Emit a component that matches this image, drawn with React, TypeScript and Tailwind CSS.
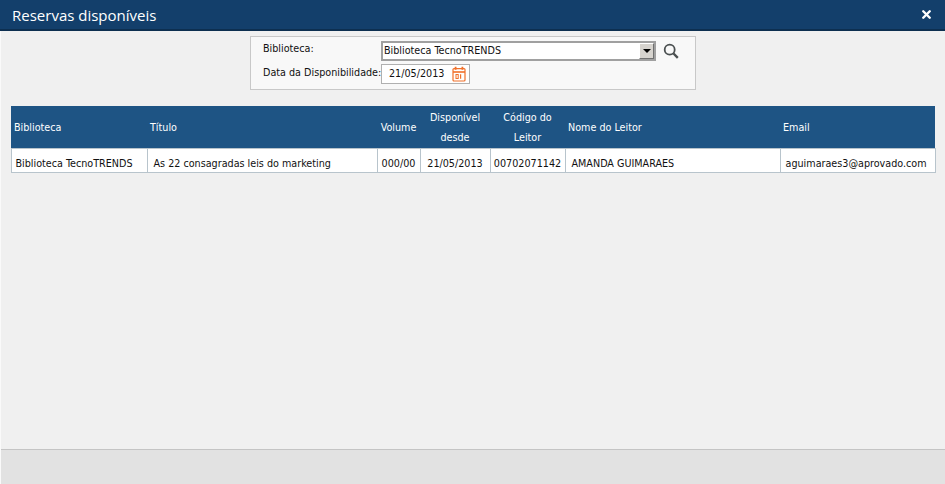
import { X } from "lucide-react"

const body = "font-['DejaVu_Sans_Condensed','DejaVu_Sans',sans-serif] [font-stretch:condensed]"

const colunas = [
  { titulo: "Biblioteca", w: "w-[136px]", align: "text-left pl-[3px]" },
  { titulo: "Título", w: "w-[230px]", align: "text-left pl-[3px]" },
  { titulo: "Volume", w: "w-[43px]", align: "text-center" },
  { titulo: "Disponível desde", w: "w-[70px]", align: "text-center px-2" },
  { titulo: "Código do Leitor", w: "w-[75px]", align: "text-center px-2" },
  { titulo: "Nome do Leitor", w: "w-[215px]", align: "text-left pl-[3px]" },
  { titulo: "Email", w: "w-[155px]", align: "text-left pl-[3px]" },
]

const linha = [
  { valor: "Biblioteca TecnoTRENDS", align: "pl-[4px]" },
  { valor: "As 22 consagradas leis do marketing", align: "pl-[6px]" },
  { valor: "000/00", align: "text-center" },
  { valor: "21/05/2013", align: "text-center" },
  { valor: "00702071142", align: "text-center" },
  { valor: "AMANDA GUIMARAES", align: "pl-[6px]" },
  { valor: "aguimaraes3@aprovado.com", align: "pl-[5px]" },
]

function CalendarIcon() {
  return (
    <svg width="14" height="16" viewBox="0 0 14 16" fill="none" stroke="#f0702a" strokeWidth="1.2">
      <rect x="1" y="2.6" width="12" height="12.4" rx="1" />
      <path d="M1 6h12" strokeWidth="1.6" />
      <path d="M3.6 0.8v3M10.4 0.8v3" strokeWidth="1.8" />
      <rect x="4" y="8.5" width="2.2" height="4" strokeWidth="1" />
      <path d="M8.6 8.3v4.4" strokeWidth="1.2" />
    </svg>
  )
}

function SearchIcon() {
  return (
    <svg width="16" height="16" viewBox="0 0 16 16" fill="none" stroke="#4a4f50">
      <circle cx="6.7" cy="6.7" r="5" strokeWidth="1.8" />
      <path d="M10.5 10.5l4.3 4.3" strokeWidth="2.4" />
    </svg>
  )
}

export default function App() {
  return (
    <div className={`h-[484px] w-[945px] flex flex-col bg-[#f0f0f0] border-l border-[#fafafa] text-[#111] ${body}`}>
      <div className="h-[31px] -ml-px shrink-0 flex items-center justify-between pl-[12px] pr-[12px] bg-[#133f6b] border-b-2 border-[#0d2f50]">
        <span className="text-white text-[15px] pt-[1px] font-['Open_Sans',sans-serif] [font-stretch:normal]">Reservas disponíveis</span>
        <X size={13} strokeWidth={4.5} className="text-white" />
      </div>

      <div className="flex-1 flex flex-col">
        <div className="mt-[5px] ml-[249px] w-[446px] h-[54px] bg-[#f8f8f8] border border-[#c8c8c8] pl-[12px] pt-[4px] text-[10.7px]">
          <div className="flex h-[21px]">
            <span className="w-[118px] shrink-0">Biblioteca:</span>
            <div className="w-[275px] h-[20px] bg-white border-2 border-[#a0a0a0] flex items-center justify-between pl-[1px]">
              <span>Biblioteca TecnoTRENDS</span>
              <div className="w-[15px] h-full bg-[#d6d3ce] border border-t-white border-l-white border-r-[#707070] border-b-[#707070] flex items-center justify-center">
                <div className="w-0 h-0 border-x-[4px] border-x-transparent border-t-[4px] border-t-black" />
              </div>
            </div>
            <div className="ml-[7px] mt-[2px]">
              <SearchIcon />
            </div>
          </div>
          <div className="flex h-[21px] mt-[2px]">
            <span className="w-[118px] shrink-0 pt-[1px] whitespace-nowrap">Data da Disponibilidade:</span>
            <div className="w-[89px] h-[20px] bg-white border border-[#b0b0b0] flex items-center justify-between pl-[7px] pr-[3px]">
              <span>21/05/2013</span>
              <CalendarIcon />
            </div>
          </div>
        </div>

        <table className="mt-[16px] ml-[9.5px] w-[924px] table-fixed border-collapse text-[10.7px]">
          <thead>
            <tr className="h-[42px] bg-[#1e5484] text-white">
              {colunas.map((c) => (
                <th key={c.titulo} className={`${c.w} ${c.align} font-normal leading-[20px] p-0 pt-[2px]`}>
                  {c.titulo}
                </th>
              ))}
            </tr>
          </thead>
          <tbody>
            <tr className="h-[23px] bg-white">
              {linha.map((c) => (
                <td key={c.valor} className={`${c.align} border border-[#b8c4cc] p-0 pt-[7px] leading-[16px] whitespace-nowrap`}>
                  {c.valor}
                </td>
              ))}
            </tr>
          </tbody>
        </table>
      </div>

      <div className="h-[35px] shrink-0 bg-[#e2e2e2] border-t border-[#c4c4c4]" />
    </div>
  )
}
